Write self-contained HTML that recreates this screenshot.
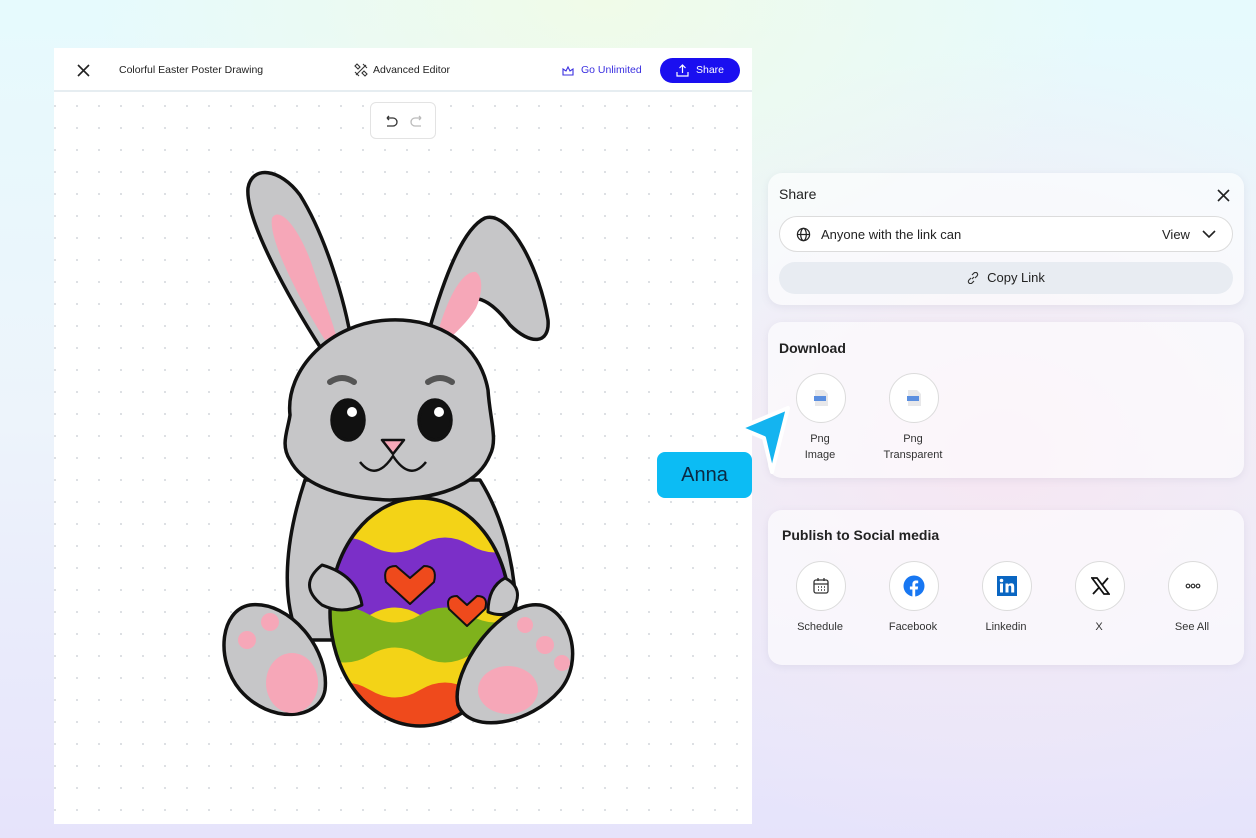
<!DOCTYPE html>
<html><head><meta charset="utf-8"><style>
*{box-sizing:border-box;margin:0;padding:0}
body{width:1256px;height:838px;overflow:hidden;font-family:"Liberation Sans",sans-serif;position:relative;
background:radial-gradient(ellipse 500px 300px at 600px 0px,#f0fbe8 0%,rgba(240,251,232,0) 100%),radial-gradient(ellipse 500px 400px at 1000px 450px,#f6e6f2 0%,rgba(246,230,242,0) 100%),linear-gradient(180deg,#e6fafd 0%,#edf4fb 50%,#e6e3fb 100%);border-radius:20px}
.canvas{position:absolute;left:54px;top:48px;width:698px;height:776px;background:#fff;}
.hdr{height:44px;border-bottom:2px solid #e6edf1;position:relative;font-size:10.5px;color:#222}
.grid{position:absolute;left:0;top:46px;right:0;bottom:0;background-image:radial-gradient(circle,#d8dbe0 0.9px,transparent 1.2px);background-size:22px 22px;background-position:12px 1px}
.card{position:absolute;left:768px;width:476px;border-radius:14px;background:rgba(255,255,255,.6);box-shadow:0 2px 8px rgba(120,120,160,.12)}
.t{position:absolute;font-size:14px;font-weight:bold;color:#222}
.circ{position:absolute;width:50px;height:50px;border-radius:50%;background:#fff;border:1px solid #dcdcdc;display:flex;align-items:center;justify-content:center}
.lbl{position:absolute;font-size:11px;color:#333;text-align:center;width:90px;line-height:16px}
</style></head><body>
<div class="canvas">
<div class="hdr">
<svg style="position:absolute;left:23px;top:16px" width="13" height="13" viewBox="0 0 13 13"><path d="M1 1L12 12M12 1L1 12" stroke="#222" stroke-width="1.6"/></svg>
<span style="position:absolute;left:65px;top:16px">Colorful Easter Poster Drawing</span>
<svg style="position:absolute;left:300px;top:15px" width="14" height="14" viewBox="0 0 14 14" fill="none" stroke="#333" stroke-width="1.1"><path d="M2 12L12 2M1 3l2-2 3 3-2 2zM8 10l2-2 3 3-2 2zM9 1l4 4M1 9l4 4"/></svg>
<span style="position:absolute;left:319px;top:16px">Advanced Editor</span>
<svg style="position:absolute;left:508px;top:17px" width="12" height="11" viewBox="0 0 12 11" fill="none" stroke="#3a2fe0" stroke-width="1.1"><path d="M1 4l3 2 2-4 2 4 3-2v6H1z"/></svg>
<span style="position:absolute;left:527px;top:16px;color:#3a2fe0">Go Unlimited</span>
<div style="position:absolute;left:606px;top:10px;width:80px;height:25px;border-radius:13px;background:#1a0ff0;color:#fff;font-size:10.5px;padding:6px 0 0 36px">Share
<svg style="position:absolute;left:16px;top:6px" width="13" height="13" viewBox="0 0 13 13" fill="none" stroke="#fff" stroke-width="1.2"><path d="M6.5 9V1M3.5 4l3-3 3 3M1 8v4h11V8"/></svg></div>
</div>
<div class="grid"></div>
<div style="position:absolute;left:316px;top:54px;width:66px;height:37px;border:1px solid #e3e3e3;border-radius:6px;background:#fff">
<svg style="position:absolute;left:13px;top:12px" width="40" height="14" viewBox="0 0 40 14" fill="none" stroke-width="1.3"><path d="M3 3h6a4 4 0 010 8H3M3 3l2-2M3 3l2 2" stroke="#333"/><path d="M37 3h-6a4 4 0 000 8h6M37 3l-2-2M37 3l-2 2" stroke="#bbb"/></svg></div>
<svg style="position:absolute;left:0;top:0" width="698" height="776" viewBox="54 48 698 776" stroke="#111" stroke-width="3.5" stroke-linejoin="round">
<defs><clipPath id="egg"><ellipse cx="420" cy="612" rx="90" ry="114"/></clipPath></defs>
<path d="M322 350C290 300 245 220 248 188C252 165 280 168 300 195C325 235 345 300 352 345Z" fill="#c6c6c8"/>
<path d="M325 340C300 300 268 240 272 218C280 205 300 230 312 265C322 295 332 320 336 335Z" fill="#f6a7b8" stroke="none"/>
<path d="M425 345C440 290 460 230 485 218C510 210 540 270 548 320C550 345 530 345 510 325C495 305 480 295 470 300C455 320 450 340 445 350Z" fill="#c6c6c8"/>
<path d="M436 340C446 300 462 270 476 272C484 278 482 295 476 308C468 322 455 333 445 343Z" fill="#f6a7b8" stroke="none"/>
<path d="M305 480C285 540 280 600 300 640L515 640C520 580 505 520 480 480Z" fill="#c6c6c8"/>
<path d="M390 320C440 318 480 345 488 390C490 420 498 440 490 455C480 480 450 498 390 500C330 498 300 480 290 460C280 445 288 430 290 415C285 370 330 322 390 320Z" fill="#c6c6c8"/>
<path d="M330 382q12-8 24 0M428 382q12-8 24 0" stroke="#555" stroke-width="6" fill="none" stroke-linecap="round"/>
<ellipse cx="348" cy="420" rx="16" ry="20" fill="#111"/><ellipse cx="435" cy="420" rx="16" ry="20" fill="#111"/>
<circle cx="352" cy="412" r="5" fill="#fff" stroke="none"/><circle cx="439" cy="412" r="5" fill="#fff" stroke="none"/>
<path d="M382 440h22l-11 14z" fill="#f6a7b8" stroke-width="2.5"/>
<path d="M360 462q16 20 33-6q17 26 33 6" fill="none" stroke-width="2.5"/>
<g clip-path="url(#egg)" stroke="none">
<rect x="320" y="490" width="200" height="250" fill="#f3d317"/>
<path d="M320 545q25-15 50 0t50 0t50 0t50 0V615q-25-15-50 0t-50 0t-50 0t-50 0z" fill="#7b2fc8"/>
<path d="M320 615q25-15 50 0t50 0t50 0t50 0V655q-25-15-50 0t-50 0t-50 0t-50 0z" fill="#7fb21c"/>
<path d="M320 690q25-15 50 0t50 0t50 0t50 0V740H320z" fill="#ef4a1c"/>
</g>
<ellipse cx="420" cy="612" rx="90" ry="114" fill="none"/>
<path d="M410 578l-14-12q-14 0-10 16l24 22 24-22q4-16-10-16z" fill="#ef4a1c" stroke-width="2"/>
<path d="M467 605l-10-9q-12 0-8 13l18 17 18-17q4-13-8-13z" fill="#ef4a1c" stroke-width="2"/>
<path d="M250 605C220 610 215 660 240 690C270 725 320 720 325 690C330 650 290 600 250 605Z" fill="#c6c6c8"/>
<ellipse cx="292" cy="683" rx="26" ry="30" fill="#f6a7b8" stroke="none"/>
<circle cx="247" cy="640" r="9" fill="#f6a7b8" stroke="none"/><circle cx="270" cy="622" r="9" fill="#f6a7b8" stroke="none"/>
<path d="M540 605C570 610 585 660 560 690C530 725 470 735 458 705C450 670 500 600 540 605Z" fill="#c6c6c8"/>
<ellipse cx="508" cy="690" rx="30" ry="24" fill="#f6a7b8" stroke="none"/>
<circle cx="545" cy="645" r="9" fill="#f6a7b8" stroke="none"/><circle cx="562" cy="663" r="8" fill="#f6a7b8" stroke="none"/><circle cx="525" cy="625" r="8" fill="#f6a7b8" stroke="none"/>
<path d="M322 565q-25 20 0 40q20 10 40 0q-5-30-40-40z" fill="#c6c6c8" stroke-width="3"/>
<path d="M505 578q20 10 8 32q-10 8-25 2q0-25 17-34z" fill="#c6c6c8" stroke-width="3"/>
</svg>
</div>

<div class="card" style="top:173px;height:132px">
<div class="t" style="left:11px;top:13px;font-weight:normal;color:#222">Share</div>
<svg style="position:absolute;left:449px;top:16px" width="13" height="13" viewBox="0 0 13 13"><path d="M1 1L12 12M12 1L1 12" stroke="#222" stroke-width="1.6"/></svg>
<div style="position:absolute;left:11px;top:43px;width:454px;height:36px;border:1px solid #dcdcdc;border-radius:18px;background:#fff;font-size:13px;color:#222">
<svg style="position:absolute;left:16px;top:10px" width="15" height="15" viewBox="0 0 16 16" fill="none" stroke="#222" stroke-width="1.3"><circle cx="8" cy="8" r="6.5"/><ellipse cx="8" cy="8" rx="3" ry="6.5"/><path d="M1.5 8h13"/></svg>
<span style="position:absolute;left:41px;top:10px">Anyone with the link can</span>
<span style="position:absolute;left:382px;top:10px">View</span>
<svg style="position:absolute;left:422px;top:13px" width="14" height="9" viewBox="0 0 14 9"><path d="M1 1l6 6 6-6" stroke="#222" stroke-width="1.6" fill="none"/></svg></div>
<div style="position:absolute;left:11px;top:89px;width:454px;height:32px;border-radius:16px;background:#e8ecf2;font-size:13px;color:#222;text-align:center;line-height:32px">
<svg style="vertical-align:-2px;margin-right:8px" width="12" height="12" viewBox="0 0 12 12" fill="none" stroke="#333" stroke-width="1.2"><path d="M5 7l2-2M4 6L2 8a2 2 0 003 3l2-2M8 6l2-2a2 2 0 00-3-3L5 3"/></svg>Copy Link</div>
</div>

<div class="card" style="top:322px;height:156px">
<div class="t" style="left:11px;top:18px">Download</div>
<div class="circ" style="left:28px;top:51px"><svg width="16" height="18" viewBox="0 0 16 18"><path d="M2 1h9l4 4v12H2z" fill="#e8e8ea"/><rect x="1" y="7" width="12" height="5" fill="#5b8fe0"/></svg></div>
<div class="lbl" style="left:7px;top:109px">Png<br>Image</div>
<div class="circ" style="left:121px;top:51px"><svg width="16" height="18" viewBox="0 0 16 18"><path d="M2 1h9l4 4v12H2z" fill="#e8e8ea"/><rect x="1" y="7" width="12" height="5" fill="#5b8fe0"/></svg></div>
<div class="lbl" style="left:100px;top:109px">Png<br>Transparent</div>
</div>

<div class="card" style="top:510px;height:155px">
<div class="t" style="left:14px;top:17px">Publish to Social media</div>
<div class="circ" style="left:28px;top:51px"><svg width="18" height="18" viewBox="0 0 18 18" fill="none" stroke="#333" stroke-width="1.3"><rect x="2" y="3" width="14" height="13" rx="2"/><path d="M2 7h14M6 1v3M12 1v3"/><path d="M6 10h1M9 10h1M12 10h1M6 13h1M9 13h1M12 13h1" stroke-width="1.5"/></svg></div>
<div class="lbl" style="left:7px;top:109px">Schedule</div>
<div class="circ" style="left:121px;top:51px"><svg width="22" height="22" viewBox="0 0 22 22"><circle cx="11" cy="11" r="10.5" fill="#1877f2"/><path d="M12.2 22v-7.5h2.5l.4-3h-2.9V9.7c0-.8.3-1.4 1.5-1.4h1.5V5.6c-.3 0-1.2-.1-2.2-.1-2.2 0-3.6 1.3-3.6 3.7v2.3H6.9v3h2.5V22z" fill="#fff"/></svg></div>
<div class="lbl" style="left:100px;top:109px">Facebook</div>
<div class="circ" style="left:214px;top:51px"><svg width="20" height="20" viewBox="0 0 20 20"><rect width="20" height="20" fill="#0a66c2"/><rect x="3" y="7.5" width="3" height="9" fill="#fff"/><circle cx="4.5" cy="4.5" r="1.8" fill="#fff"/><path d="M8.5 7.5h2.8v1.3c.5-.9 1.6-1.5 3-1.5 2.4 0 2.9 1.6 2.9 3.6v5.6h-3v-5c0-1-.2-1.9-1.3-1.9s-1.4.8-1.4 1.9v5H8.5z" fill="#fff"/></svg></div>
<div class="lbl" style="left:193px;top:109px">Linkedin</div>
<div class="circ" style="left:307px;top:51px"><svg width="19" height="18" viewBox="0 0 19 18"><path d="M1 1h5l12 16h-5z" fill="none" stroke="#111" stroke-width="1.8"/><path d="M17 1L11 8M2 17l6.5-7" stroke="#111" stroke-width="1.8"/></svg></div>
<div class="lbl" style="left:286px;top:109px">X</div>
<div class="circ" style="left:400px;top:51px"><svg width="16" height="6" viewBox="0 0 16 6" fill="none" stroke="#333" stroke-width="1.2"><circle cx="3" cy="3" r="1.8"/><circle cx="8" cy="3" r="1.8"/><circle cx="13" cy="3" r="1.8"/></svg></div>
<div class="lbl" style="left:379px;top:109px">See All</div>
</div>

<svg style="position:absolute;left:730px;top:398px" width="66" height="82" viewBox="730 398 66 82"><path d="M740 428L788 408L772 472L764 438Z" fill="#14b4f0" stroke="#fff" stroke-width="4" stroke-linejoin="round"/></svg>
<div style="position:absolute;left:657px;top:452px;width:95px;height:46px;border-radius:8px;background:#0cbcf4;color:#0a2a44;font-size:20px;text-align:center;line-height:46px">Anna</div>
</body></html>
